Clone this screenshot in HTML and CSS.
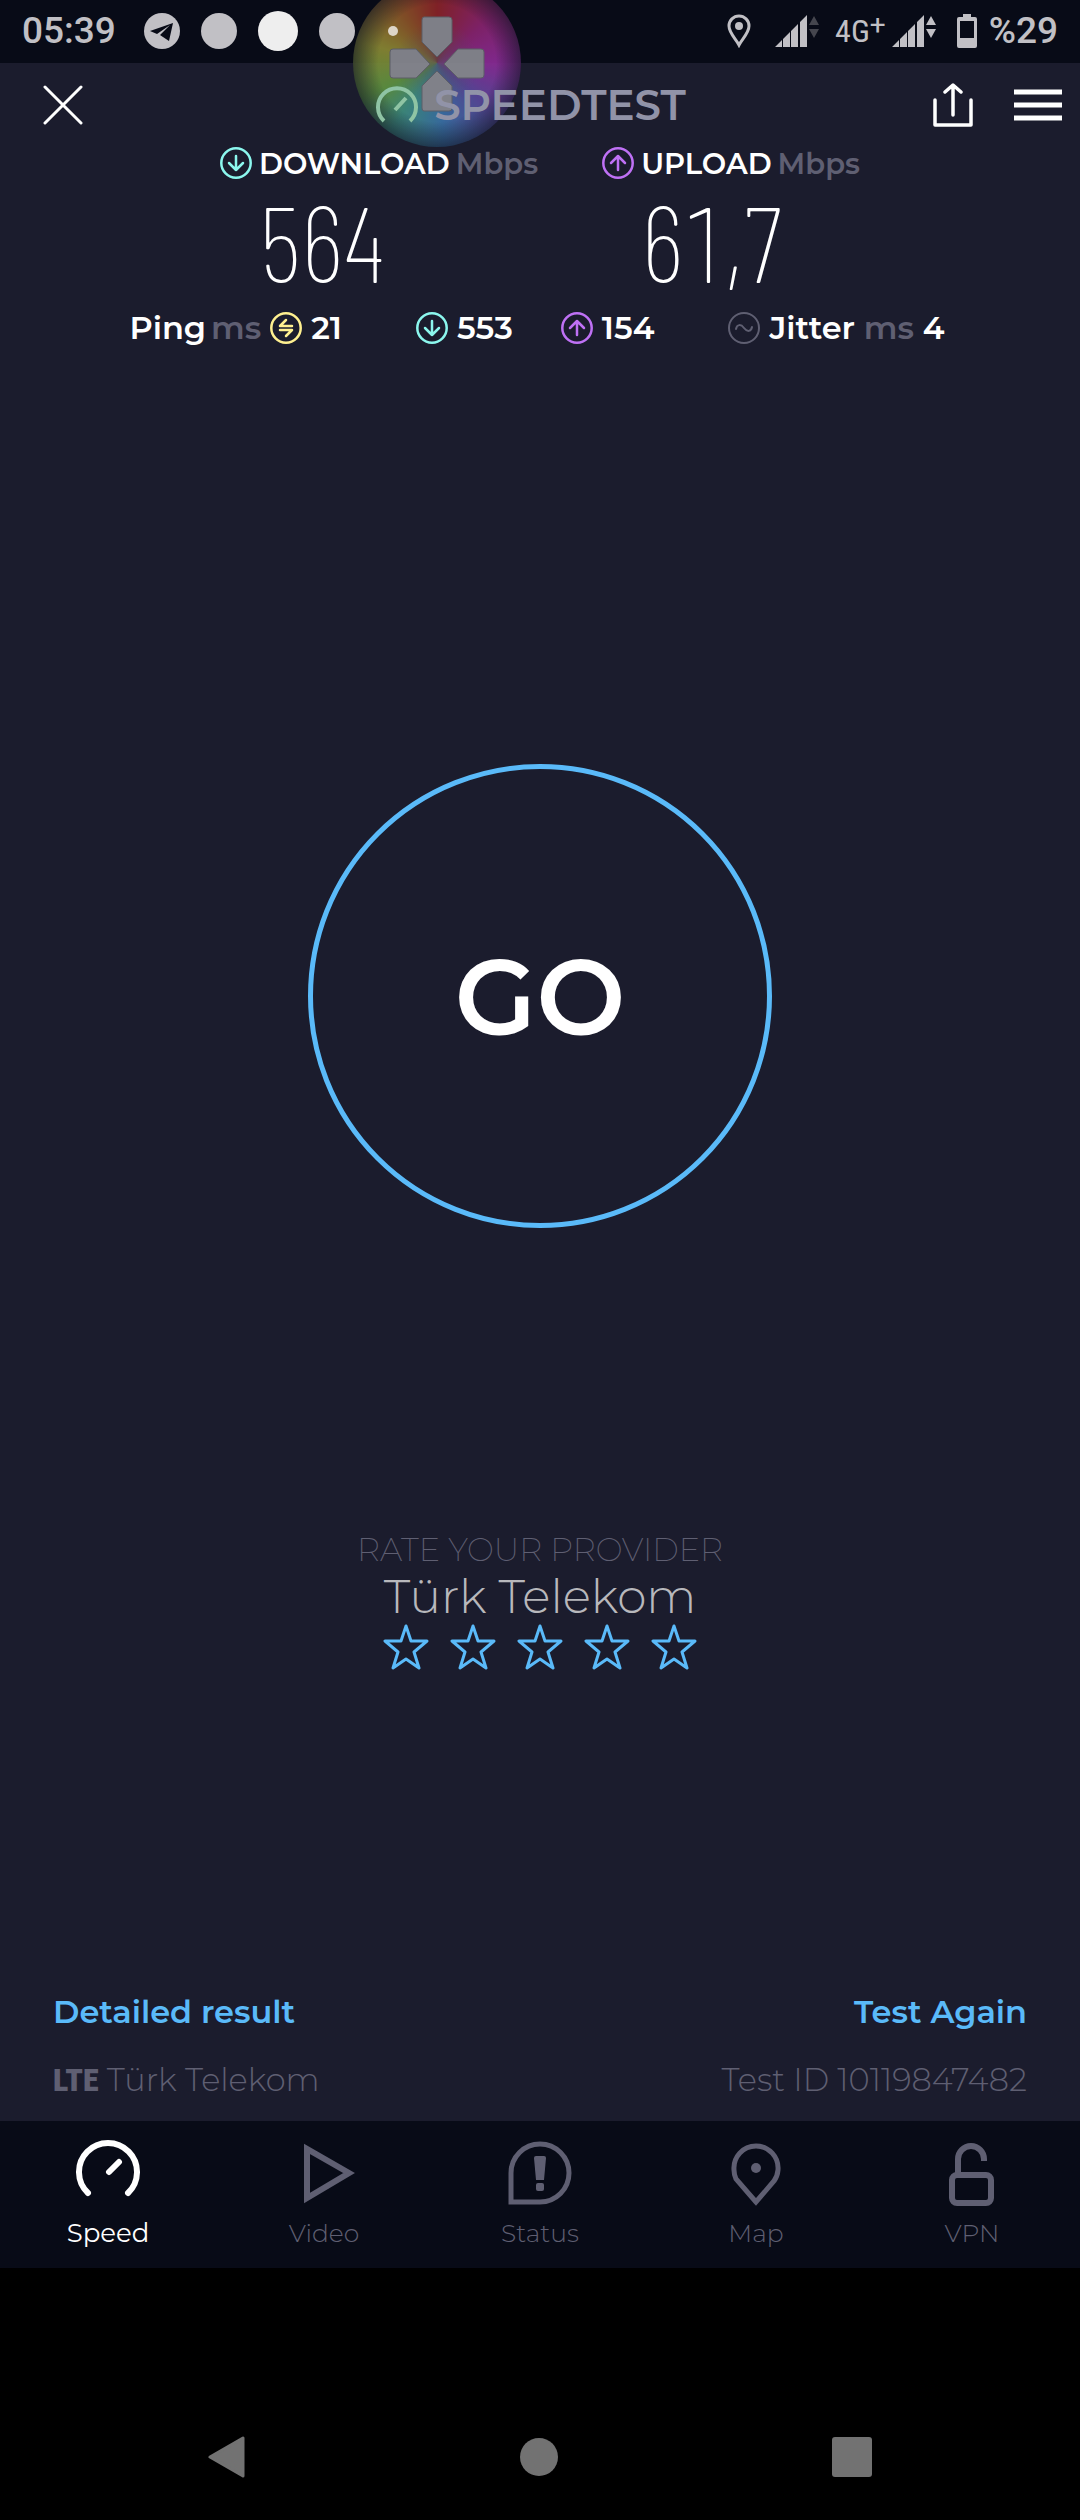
FILE: index.html
```html
<!DOCTYPE html>
<html lang="en">
<head>
    <meta charset="UTF-8">
    <meta name="viewport" content="width=device-width, initial-scale=1.0">
    <title>Speedtest</title>
    <link rel="stylesheet" href="styles.css">
</head>
<body>
    <!-- shared icons -->
    <svg class="sprite" aria-hidden="true">
        <symbol id="down" viewBox="0 0 32 32">
            <g fill="none" stroke="currentColor" stroke-width="2.5" stroke-linecap="round" stroke-linejoin="round">
                <circle cx="16" cy="16" r="14.7"/>
                <path d="M16 9v14M9 16l7 7 7-7"/>
            </g>
        </symbol>
        <symbol id="up" viewBox="0 0 32 32">
            <g fill="none" stroke="currentColor" stroke-width="2.5" stroke-linecap="round" stroke-linejoin="round">
                <circle cx="16" cy="16" r="14.7"/>
                <path d="M16 23V9M9 16l7-7 7 7"/>
            </g>
        </symbol>
        <symbol id="star" viewBox="0 0 46 46">
            <path d="M23 2l5 15h16L31 28l5 16-13-9-13 9 5-16L2 17h16z" fill="none" stroke="currentColor" stroke-width="3" stroke-linejoin="round"/>
        </symbol>
        <symbol id="signal" viewBox="0 0 32 34">
            <path d="M0 33l7-7v7zM8 25l7-7v15H8zM16 17l7-7v23h-7zM25 8l7-7v32h-7z" fill="#c1c0c5"/>
        </symbol>
        <symbol id="arrows" viewBox="0 0 10 34">
            <path d="M5 2l5 9H0zM0 15h10l-5 9z" fill="currentColor"/>
        </symbol>
    </svg>

    <!-- floating gamepad bubble -->
    <div class="bubble">
        <svg viewBox="0 0 168 168">
            <g fill="#8b8c94" stroke="#65666e" stroke-width="1">
                <path d="M71 38h25q3 0 3 3v22L84 78 69 63V41q0-3 2-3z"/>
                <path d="M71 132h25q3 0 3-3v-22L84 92l-15 15v22q0 3 2 3z"/>
                <path d="M37 73q0-3 3-3h23l14 15-14 14H40q-3 0-3-3z"/>
                <path d="M131 73q0-3-3-3h-23L91 85l14 14h23q3 0 3-3z"/>
            </g>
        </svg>
    </div>

    <div class="status-bar">
        <span class="time">05:39</span>
        <div class="notifications">
            <svg width="36" height="36" viewBox="0 0 36 36">
                <circle cx="18" cy="18" r="18" fill="#c1c0c5"/>
                <path d="M6 18L29 10l-4 18-9-6 10-10-13 9z" fill="#080b17"/>
            </svg>
            <span class="dot"></span>
            <span class="dot bright"></span>
            <span class="dot"></span>
            <span class="dot tiny"></span>
        </div>
        <div class="phone-state">
            <svg class="pin" width="24" height="34" viewBox="0 0 24 34">
                <path d="M12 31C9 25 2 19 2 12a10 10 0 0 1 20 0c0 7-7 13-10 19z" fill="none" stroke="#c1c0c5" stroke-width="3"/>
                <circle cx="12" cy="12" r="4" fill="#c1c0c5"/>
            </svg>
            <div class="signal">
                <svg width="32" height="34"><use href="#signal"/></svg>
                <svg class="idle" width="10" height="34"><use href="#arrows"/></svg>
            </div>
            <span class="network">4G<span class="plus">+</span></span>
            <div class="signal">
                <svg width="32" height="34"><use href="#signal"/></svg>
                <svg width="10" height="34"><use href="#arrows"/></svg>
            </div>
            <svg class="battery" width="20" height="34" viewBox="0 0 20 34">
                <path fill-rule="evenodd" d="M6 0h8v3h4q2 0 2 2v27q0 2-2 2H2q-2 0-2-2V5q0-2 2-2h4zM3 7v17h14V7z" fill="#c1c0c5"/>
            </svg>
            <span class="time">%29</span>
        </div>
    </div>

    <header class="app-header">
        <button class="icon-button close" aria-label="Close">
            <svg width="40" height="40" viewBox="0 0 40 40"><path d="M2 2l36 36M38 2L2 38" stroke="#fff" stroke-width="3" stroke-linecap="round"/></svg>
        </button>
        <h1 class="logo">
            <svg width="42" height="42" viewBox="0 0 42 42">
                <path d="M8 37a19 19 0 1 1 26 0M19 26l11-12" fill="none" stroke="#8fc4a4" stroke-width="4"/>
            </svg>
            SPEEDTEST
        </h1>
        <div class="actions">
            <button class="icon-button" aria-label="Share">
                <svg width="42" height="44" viewBox="0 0 42 44">
                    <path d="M3 17v25h36V17M21 32V3M13 9l8-7 8 7" fill="none" stroke="#fff" stroke-width="3.5" stroke-linecap="round" stroke-linejoin="round"/>
                </svg>
            </button>
            <button class="icon-button" aria-label="Menu">
                <svg width="48" height="32" viewBox="0 0 48 32"><path d="M0 3h48M0 16h48M0 29h48" stroke="#fff" stroke-width="5"/></svg>
            </button>
        </div>
    </header>

    <main>
        <section class="results">
            <div class="speeds">
                <div class="speed">
                    <svg class="icon download"><use href="#down"/></svg>
                    <h2>DOWNLOAD <span class="unit">Mbps</span></h2>
                    <p class="value">564</p>
                </div>
                <div class="speed">
                    <svg class="icon upload"><use href="#up"/></svg>
                    <h2>UPLOAD <span class="unit">Mbps</span></h2>
                    <p class="value">61,7</p>
                </div>
            </div>
            <div class="latency">
                <div class="metric">
                    <span class="label">Ping <span class="unit">ms</span></span>
                    <svg class="icon ping" viewBox="0 0 32 32">
                        <g fill="none" stroke="currentColor" stroke-width="2.5" stroke-linecap="round" stroke-linejoin="round">
                            <circle cx="16" cy="16" r="14.7"/>
                            <path d="M22 14H10l6-6M10 18h12l-6 6"/>
                        </g>
                    </svg>
                    <span>21</span>
                </div>
                <div class="loaded">
                    <div class="metric">
                        <svg class="icon download"><use href="#down"/></svg>
                        <span>553</span>
                    </div>
                    <div class="metric">
                        <svg class="icon upload"><use href="#up"/></svg>
                        <span>154</span>
                    </div>
                </div>
                <div class="metric">
                    <svg class="icon jitter" viewBox="0 0 32 32">
                        <g fill="none" stroke="currentColor" stroke-width="2" stroke-linecap="round">
                            <circle cx="16" cy="16" r="15"/>
                            <path d="M8 17c1-5 5-5 8-1s7 4 8-1"/>
                        </g>
                    </svg>
                    <span>Jitter <span class="unit">ms</span> 4</span>
                </div>
            </div>
        </section>

        <button class="go">GO</button>

        <section class="rating">
            <p class="rating-title">RATE YOUR PROVIDER</p>
            <p class="provider">Türk Telekom</p>
            <div class="stars">
                <button class="icon-button" aria-label="1 star"><svg width="46" height="46"><use href="#star"/></svg></button>
                <button class="icon-button" aria-label="2 stars"><svg width="46" height="46"><use href="#star"/></svg></button>
                <button class="icon-button" aria-label="3 stars"><svg width="46" height="46"><use href="#star"/></svg></button>
                <button class="icon-button" aria-label="4 stars"><svg width="46" height="46"><use href="#star"/></svg></button>
                <button class="icon-button" aria-label="5 stars"><svg width="46" height="46"><use href="#star"/></svg></button>
            </div>
        </section>

        <section class="details">
            <div class="row links">
                <a href="#">Detailed result</a>
                <a href="#">Test Again</a>
            </div>
            <div class="row">
                <span class="carrier"><b>LTE</b> Türk Telekom</span>
                <span>Test ID 10119847482</span>
            </div>
        </section>
    </main>

    <nav class="tabs">
        <a href="#" class="active">
            <svg width="64" height="66" viewBox="0 0 64 66"><path d="M12 53a29 29 0 1 1 40 0M33 32l10-10" fill="none" stroke="currentColor" stroke-width="6" stroke-linecap="round"/></svg>
            Speed
        </a>
        <a href="#">
            <svg width="64" height="66" viewBox="0 0 64 66"><path d="M15 9v49l42-25z" fill="none" stroke="currentColor" stroke-width="6"/></svg>
            Video
        </a>
        <a href="#">
            <svg width="64" height="66" viewBox="0 0 64 66">
                <path d="M3 62V33a29 29 0 1 1 29 29z" fill="none" stroke="currentColor" stroke-width="5"/>
                <path d="M28 16h8q2 0 2 2l-2 22h-8l-2-22q0-2 2-2z" fill="currentColor"/>
                <rect x="28" y="43" width="8" height="8" rx="2" fill="currentColor"/>
            </svg>
            Status
        </a>
        <a href="#">
            <svg width="64" height="66" viewBox="0 0 64 66">
                <path d="M32 62L12 39a22 22 0 0 1-2-9C9 17 19 6 32 6s23 11 22 24a22 22 0 0 1-4 11z" fill="none" stroke="currentColor" stroke-width="5"/>
                <circle cx="32" cy="28" r="5" fill="currentColor"/>
            </svg>
            Map
        </a>
        <a href="#">
            <svg width="64" height="66" viewBox="0 0 64 66">
                <path d="M18 33V19a13 13 0 0 1 26 0v2" fill="none" stroke="currentColor" stroke-width="6"/>
                <rect x="12" y="35" width="39" height="28" rx="5" fill="none" stroke="currentColor" stroke-width="6"/>
            </svg>
            VPN
        </a>
    </nav>

    <div class="system-nav">
        <button class="icon-button" aria-label="Back">
            <svg width="38" height="42" viewBox="0 0 38 42"><path d="M35 2v38L2 21z" fill="#727272" stroke="#727272" stroke-width="3" stroke-linejoin="round"/></svg>
        </button>
        <button class="icon-button" aria-label="Home">
            <svg width="38" height="38" viewBox="0 0 38 38"><circle cx="19" cy="19" r="19" fill="#727272"/></svg>
        </button>
        <button class="icon-button" aria-label="Recent apps">
            <svg width="40" height="40" viewBox="0 0 40 40"><rect width="40" height="40" rx="3" fill="#727272"/></svg>
        </button>
    </div>
</body>
</html>
```
FILE: styles.css
```css
* {
    box-sizing: border-box;
}

body {
    margin: 0;
    min-height: 100vh;
    display: flex;
    flex-direction: column;
    position: relative;
    overflow-x: hidden;
    background-color: #1b1c2d;
    color: white;
    font-family: Montserrat, Inter, sans-serif;
    font-size: 32px;
    line-height: 40px;
}

h1, h2, p {
    margin: 0;
}

a {
    text-decoration: none;
}

svg {
    display: block;
    flex-shrink: 0;
}

.sprite {
    position: absolute;
    width: 0;
    height: 0;
}

.icon-button {
    padding: 0;
    border: none;
    background: none;
    color: inherit;
    cursor: pointer;
}

/* status bar */
.status-bar {
    height: 63px;
    padding: 0 22px 2px;
    display: flex;
    align-items: center;
    background-color: #080b17;
    color: #c1c0c5;
    font-family: Roboto, sans-serif;
}

.time {
    font-size: 37px;
    font-weight: 500;
}

.notifications {
    display: flex;
    align-items: center;
    gap: 21px;
    margin-left: 28px;
}

.dot {
    width: 36px;
    height: 36px;
    border-radius: 50%;
    background-color: #c1c0c5;
}

.bright {
    width: 40px;
    height: 40px;
    background-color: #eee;
}

.tiny {
    position: relative;
    z-index: 2;
    width: 10px;
    height: 10px;
    margin-left: 12px;
    background-color: #ddd5c8;
}

.phone-state {
    display: flex;
    align-items: center;
    margin-left: auto;
}

.signal {
    display: flex;
    gap: 2px;
}

.pin {
    margin-right: 24px;
}

.idle {
    color: #45464e;
}

.network {
    display: flex;
    margin: 0 6px 0 16px;
    font-family: "Roboto Condensed", Roboto, sans-serif;
    font-size: 32px;
}

.plus {
    font-family: Roboto, sans-serif;
    font-size: 28px;
    line-height: 28px;
}

.battery {
    margin: 0 12px 0 21px;
}

/* app header */
.app-header {
    height: 84px;
    padding-right: 18px;
    display: grid;
    grid-template-columns: 1fr auto 1fr;
    align-items: center;
}

.close {
    justify-self: start;
    margin-left: 43px;
}

.logo {
    position: relative;
    z-index: 2;
    display: flex;
    align-items: center;
    gap: 16px;
    color: #9193a8;
    font-size: 42px;
    font-weight: 600;
}

.actions {
    display: flex;
    align-items: center;
    justify-content: flex-end;
    gap: 40px;
}

.bubble {
    position: absolute;
    z-index: 1;
    top: -21px;
    left: 353px;
    width: 168px;
    height: 168px;
    border-radius: 50%;
    background:
        radial-gradient(circle closest-side, rgba(90, 85, 95, 0.6), transparent 50%, transparent 70%, rgba(15, 20, 35, 0.6)),
        conic-gradient(#8c2428, #8a2470 50deg, #8c2c98 90deg, #5a489c 130deg, #3a72a8 175deg, #3f8f80 215deg, #5f9440 245deg, #8c8a34 285deg, #8c5428 325deg, #8c2428);
    opacity: 0.9;
}

/* results */
main {
    flex: 1;
    display: flex;
    flex-direction: column;
    align-items: center;
    justify-content: space-between;
}

.speeds {
    display: flex;
    justify-content: center;
    gap: 64px;
}

.speed {
    display: grid;
    grid-template-columns: 32px auto;
    column-gap: 7px;
}

.speed h2 {
    display: flex;
    gap: 6px;
    font-size: 29px;
    font-weight: 600;
    line-height: 34px;
}

.unit {
    color: #5f5f72;
    font-weight: 600;
}

.icon {
    width: 32px;
    height: 32px;
}

.download {
    color: #8cf7ee;
}

.upload {
    color: #bf71f5;
}

.ping {
    color: #fff090;
}

.jitter {
    color: #5f5f72;
}

.value {
    grid-column: 2;
    padding-bottom: 4px;
    font-family: "Barlow Condensed", "Roboto Condensed", Roboto, sans-serif;
    font-size: 106px;
    font-weight: 200;
    font-variant-numeric: tabular-nums;
    line-height: 120px;
}

.latency {
    display: flex;
    justify-content: center;
    gap: 74px;
    padding: 3px 6px 3px 0;
    font-weight: 600;
}

.loaded {
    display: flex;
    gap: 48px;
}

.metric {
    display: flex;
    align-items: center;
    gap: 9px;
}

.label {
    display: flex;
    gap: 5px;
}

.go {
    width: 464px;
    height: 464px;
    margin-top: 111px;
    padding-top: 3px;
    border: 5px solid #5abaf9;
    border-radius: 50%;
    background: none;
    color: white;
    font-family: inherit;
    font-size: 106px;
    font-weight: 600;
    cursor: pointer;
}

/* rating */
.rating {
    padding-bottom: 20px;
    text-align: center;
}

.rating-title {
    color: #5f5f72;
    font-weight: 200;
}

.provider {
    color: #b8b8bc;
    font-size: 47px;
    font-weight: 300;
    line-height: 54px;
}

.stars {
    display: flex;
    justify-content: center;
    gap: 21px;
    color: #5abaf9;
}

/* details */
.details {
    align-self: stretch;
    padding: 0 53px 21px;
}

.row {
    display: flex;
    justify-content: space-between;
    color: #5f5f72;
    font-weight: 300;
}

.links {
    margin-bottom: 28px;
    font-weight: 600;
}

.links a {
    color: #5abaf9;
}

.carrier b {
    font-family: "Roboto Condensed", Roboto, sans-serif;
    font-weight: 900;
}

/* bottom tabs */
.tabs {
    display: grid;
    grid-template-columns: repeat(5, 1fr);
    height: 147px;
    background-color: #080b17;
}

.tabs a {
    display: flex;
    flex-direction: column;
    align-items: center;
    padding-top: 19px;
    color: #5f5f72;
    font-size: 25px;
    font-weight: 300;
    line-height: 54px;
}

.tabs .active {
    color: white;
    font-size: 26px;
    font-weight: 400;
}

.system-nav {
    height: 252px;
    padding: 126px 208px 0;
    display: flex;
    align-items: center;
    justify-content: space-between;
    background-color: black;
}
```
